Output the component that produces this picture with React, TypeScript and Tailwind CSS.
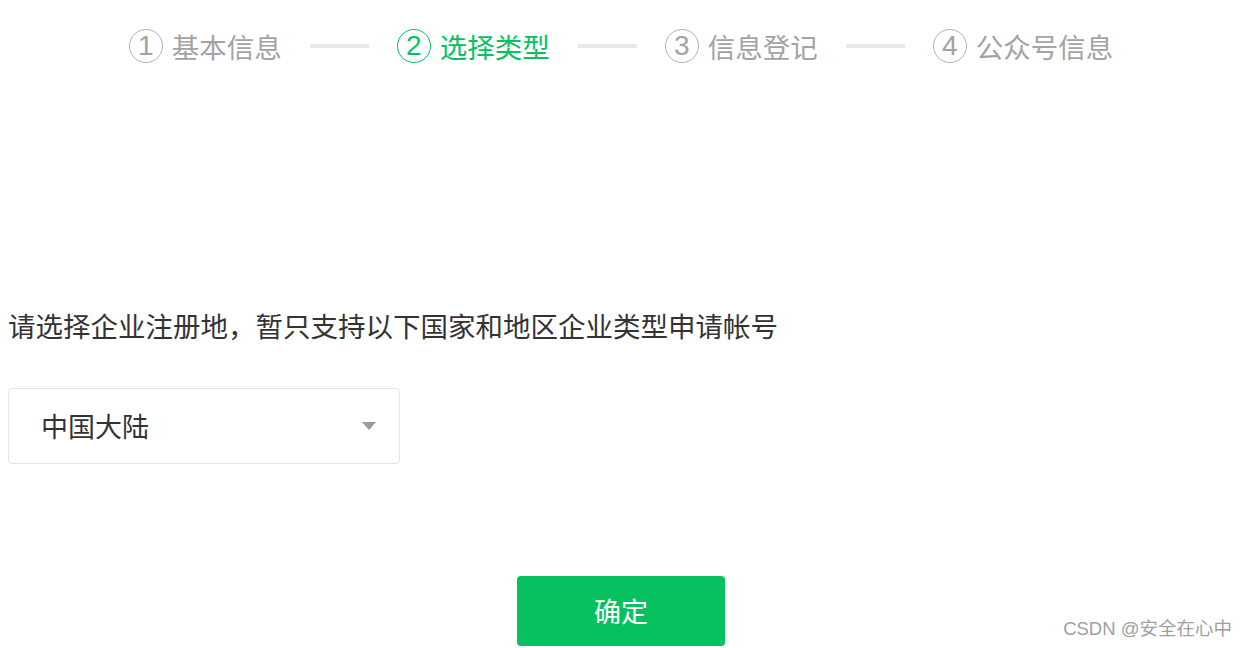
const steps = [
  { n: "1", label: "基本信息" },
  { n: "2", label: "选择类型", active: true },
  { n: "3", label: "信息登记" },
  { n: "4", label: "公众号信息" },
];

function Step({ n, label, active }: { n: string; label: string; active?: boolean }) {
  return (
    <div className={`flex items-center ${active ? "text-[#07c160]" : "text-[#a3a3a3]"}`}>
      <div
        className={`w-[34px] h-[34px] rounded-full border-[1.5px] flex items-center justify-center text-[28px] leading-none font-['Liberation_Sans',sans-serif] ${
          active ? "border-[#07c160]" : "border-[#b3b3b3]"
        }`}
      >
        {n}
      </div>
      <span className="ml-[9px] text-[27.5px] leading-[34px]">{label}</span>
    </div>
  );
}

export default function App() {
  return (
    <div className="relative w-[1246px] h-[648px] bg-white overflow-hidden font-['Noto_Sans_CJK_SC','Noto_Sans',sans-serif]">
      <div className="pl-2 pr-3">
        {/* steps */}
        <div className="flex items-center justify-center pt-[29px]">
          {steps.map((s, i) => (
            <div key={s.n} className="flex items-center">
              {i > 0 && <div className="mx-[28px] w-[59px] h-[4px] bg-[#e6e8eb]" />}
              <Step {...s} />
            </div>
          ))}
        </div>

        <p className="mt-[244px] text-[27.5px] leading-[36px] text-[#333333]">
          请选择企业注册地，暂只支持以下国家和地区企业类型申请帐号
        </p>

        {/* select */}
        <div className="mt-[45px] w-[392px] h-[76px] border border-[#e5e5e5] rounded-[4px] flex items-center justify-between pl-[32px] pr-[23px]">
          <span className="text-[27px] text-[#333333]">中国大陆</span>
          <div className="w-0 h-0 border-l-[7px] border-r-[7px] border-t-[8px] border-l-transparent border-r-transparent border-t-[#999999]" />
        </div>

        <div className="mt-[112px] flex justify-center">
          <button className="w-[208px] h-[70px] rounded-[4px] bg-[#07c160] text-white text-[27px]">
            确定
          </button>
        </div>
      </div>

      <div className="absolute right-[14px] top-[617px] text-[18.5px] leading-[24px] text-[#a0a0a0] font-['Liberation_Sans','Noto_Sans_CJK_SC',sans-serif]">
        CSDN @安全在心中
      </div>
    </div>
  );
}
